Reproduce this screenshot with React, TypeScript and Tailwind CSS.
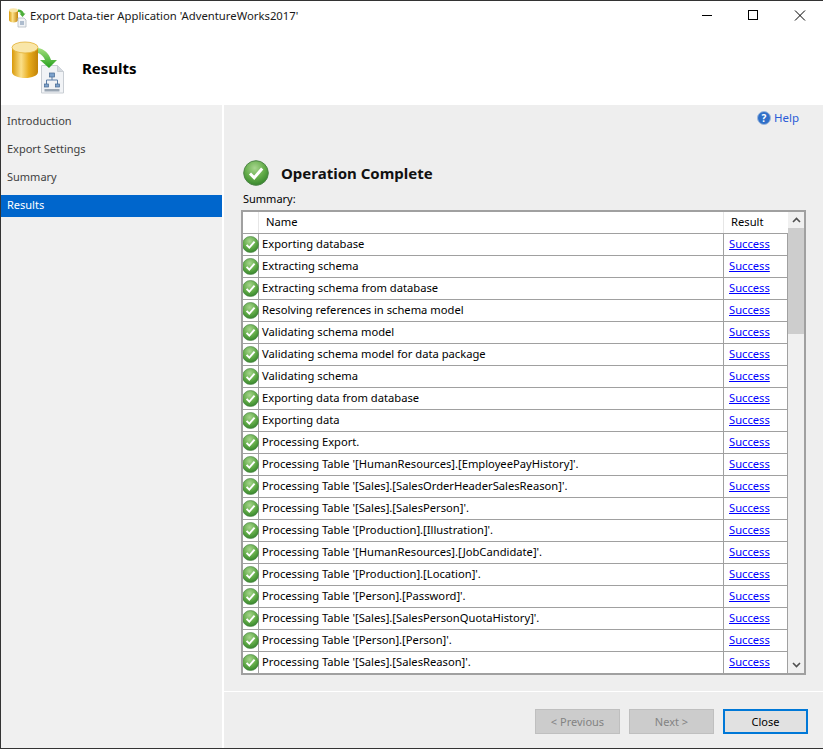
const rows = [
  "Exporting database",
  "Extracting schema",
  "Extracting schema from database",
  "Resolving references in schema model",
  "Validating schema model",
  "Validating schema model for data package",
  "Validating schema",
  "Exporting data from database",
  "Exporting data",
  "Processing Export.",
  "Processing Table '[HumanResources].[EmployeePayHistory]'.",
  "Processing Table '[Sales].[SalesOrderHeaderSalesReason]'.",
  "Processing Table '[Sales].[SalesPerson]'.",
  "Processing Table '[Production].[Illustration]'.",
  "Processing Table '[HumanResources].[JobCandidate]'.",
  "Processing Table '[Production].[Location]'.",
  "Processing Table '[Person].[Password]'.",
  "Processing Table '[Sales].[SalesPersonQuotaHistory]'.",
  "Processing Table '[Person].[Person]'.",
  "Processing Table '[Sales].[SalesReason]'.",
];

function Check({ size, id }: { size: number; id: string }) {
  return (
    <svg width={size} height={size} viewBox="0 0 26 26" className="shrink-0">
      <defs>
        <radialGradient id={id} cx="45%" cy="30%" r="75%">
          <stop offset="0%" stopColor="#a8d68f" />
          <stop offset="55%" stopColor="#62ab48" />
          <stop offset="100%" stopColor="#2f8028" />
        </radialGradient>
      </defs>
      <circle cx="13" cy="13" r="12.3" fill={`url(#${id})`} stroke="#4f8549" strokeWidth="1" />
      <path d="M7 13.5l4.2 4.2L19.2 8.6" fill="none" stroke="#fff" strokeWidth="3" />
    </svg>
  );
}

function Logo() {
  return (
    <svg width="56" height="56" viewBox="0 0 56 56" className="shrink-0">
      <defs>
        <linearGradient id="cyl" x1="0" x2="1" y1="0" y2="0">
          <stop offset="0%" stopColor="#d99a0a" />
          <stop offset="35%" stopColor="#fbe08a" />
          <stop offset="65%" stopColor="#e8ac1c" />
          <stop offset="100%" stopColor="#c28308" />
        </linearGradient>
        <linearGradient id="arrow" x1="0" x2="0" y1="0" y2="1">
          <stop offset="0%" stopColor="#a5e07f" />
          <stop offset="100%" stopColor="#23a01c" />
        </linearGradient>
      </defs>
      <path d="M1 7v24c0 3.5 6 6 13 6s13-2.500 13-6V7z" fill="url(#cyl)" />
      <ellipse cx="14" cy="6.500" rx="13" ry="5.500" fill="#f9e6a8" stroke="#e2b033" strokeWidth="0.8" />
      <path d="M30.500 24.500h16l6 6v21.500h-22z" fill="#f1f3f6" stroke="#c9ced4" strokeWidth="1" />
      <path d="M46.500 24.500v6h6" fill="#d5dae0" stroke="#c9ced4" strokeWidth="1" />
      <path d="M27 7c6 1 11 5 13 12h6l-8 8-9-8h5c-1-3-4-6-7-7z" fill="url(#arrow)" />
      <path d="M41 36v3M35.500 43v-4h11v4" fill="none" stroke="#5c7fa8" strokeWidth="1" />
      <rect x="38.500" y="32" width="5" height="4" fill="#7da2cc" stroke="#45678f" strokeWidth="0.7" />
      <rect x="33.500" y="43" width="4" height="3" fill="#7da2cc" stroke="#45678f" strokeWidth="0.7" />
      <rect x="44.500" y="43" width="4" height="3" fill="#7da2cc" stroke="#45678f" strokeWidth="0.7" />
      <rect x="33.500" y="48" width="15" height="2.500" fill="#9aa6b3" />
    </svg>
  );
}

function SmallLogo() {
  return (
    <svg width="16" height="16" viewBox="0 0 16 16" className="shrink-0 overflow-visible">
      <defs>
        <linearGradient id="cyl2" x1="0" x2="1" y1="0" y2="0">
          <stop offset="0%" stopColor="#d99a0a" />
          <stop offset="40%" stopColor="#fbe08a" />
          <stop offset="100%" stopColor="#c28308" />
        </linearGradient>
      </defs>
      <path d="M0 2v10c0 1.500 2 2.500 4.500 2.500S9 13.500 9 12V2z" fill="url(#cyl2)" />
      <ellipse cx="4.500" cy="2.200" rx="4.500" ry="2" fill="#f9e6a8" />
      <path d="M9 1.500c3 0 5 1.500 6 4h1.500l-3 3.500-3-3.500h1.500C11.500 4.500 10.500 4 9 4z" fill="#4caf3a" />
      <path d="M9 10h6l2 2v7H9z" fill="#f1f3f6" stroke="#b4bac2" strokeWidth="0.8" />
      <path d="M11 14h4M11 16h4" stroke="#6b85a5" strokeWidth="1" />
    </svg>
  );
}

function NavItem({ label, active }: { label: string; active?: boolean }) {
  return (
    <div
      className={`h-[22px] pl-[6px] pb-[1px] flex items-center ${
        active ? "bg-[#0066cc] text-white" : "text-[#404040]"
      }`}
    >
      {label}
    </div>
  );
}

function FooterButton({ label, primary }: { label: string; primary?: boolean }) {
  return primary ? (
    <div className="w-[85px] h-[25px] pt-[1px] flex items-center justify-center border-2 border-[#0078d7] bg-[#e1e1e1] text-black">
      {label}
    </div>
  ) : (
    <div className="w-[85px] h-[25px] pt-[1px] flex items-center justify-center border border-[#bfbfbf] bg-[#cccccc] text-[#838383]">
      {label}
    </div>
  );
}

export default function App() {
  return (
    <div
      className="w-[823px] h-[749px] flex flex-col bg-white border-l border-t border-b border-[#333333] text-[11px] text-black overflow-hidden"
      style={{ fontFamily: '"Noto Sans", "Open Sans", sans-serif' }}
    >
      {/* Title bar */}
      <div className="h-[30px] flex items-center shrink-0">
        <div className="ml-[8px] flex items-center">
          <SmallLogo />
        </div>
        <span className="ml-[5px] mt-[1px] text-[11.3px] text-[#1a1a1a]">
          Export Data-tier Application 'AdventureWorks2017'
        </span>
        <div className="ml-auto flex items-center">
          <svg width="46" height="30" viewBox="0 0 46 30">
            <path d="M17 14.500h10" stroke="#000" strokeWidth="1" />
          </svg>
          <svg width="46" height="30" viewBox="0 0 46 30">
            <rect x="17.500" y="9.500" width="9" height="9" fill="none" stroke="#000" strokeWidth="1" />
          </svg>
          <svg width="46" height="30" viewBox="0 0 46 30">
            <path d="M18 9.500l10 10M28 9.500l-10 10" stroke="#000" strokeWidth="1" />
          </svg>
        </div>
      </div>

      {/* Header */}
      <div className="h-[74px] shrink-0 flex items-start pl-[10px]">
        <div className="mt-[10px]">
          <Logo />
        </div>
        <span className="ml-[15px] mt-[24px] text-[15px] font-bold leading-[26px]">Results</span>
      </div>

      {/* Body */}
      <div className="flex-1 flex min-h-0 gap-[2px]">
        {/* Sidebar */}
        <div className="w-[221px] shrink-0 bg-[#f0f0f0] pt-[6px] flex flex-col gap-[6px]">
          <NavItem label="Introduction" />
          <NavItem label="Export Settings" />
          <NavItem label="Summary" />
          <NavItem label="Results" active />
        </div>

        {/* Main */}
        <div className="flex-1 bg-[#eeeeee] flex flex-col min-w-0">
          <div className="h-[586px] shrink-0 flex flex-col pl-[17px] pr-[17px]">
            <div className="h-[25px] flex items-center justify-end gap-[3px] pr-[7px] text-[11.5px] text-[#2a5bd7]">
              <svg width="14" height="14" viewBox="0 0 14 14">
                <circle cx="7" cy="7" r="6.500" fill="#2f6fc8" stroke="#9db8dc" strokeWidth="1" />
                <text x="7" y="10.500" fontSize="10" fontWeight="700" textAnchor="middle" fill="#fff">?</text>
              </svg>
              <span>Help</span>
            </div>
            <div className="mt-[29px] h-[28px] flex items-center gap-[12px] pl-[2px]">
              <Check size={26} id="bigcheck" />
              <span className="text-[15px] font-bold text-[#111111]">Operation Complete</span>
            </div>
            <div className="h-[20px] mt-[2px] mb-[1px] pl-[2px] flex items-center">Summary:</div>

            {/* Grid */}
            <div className="h-[465px] w-[565px] border-2 border-[#a0a0a0] flex bg-white overflow-hidden text-[11.2px]">
              <div className="w-[545px] shrink-0 flex flex-col">
                <div className="h-[22px] shrink-0 flex border-b border-[#a0a0a0]">
                  <div className="w-[16px] shrink-0 border-r border-[#e6e6e6]" />
                  <div className="flex-1 pl-[7px] flex items-center border-r border-[#e6e6e6]">Name</div>
                  <div className="w-[64px] shrink-0 pl-[7px] flex items-center">Result</div>
                </div>
                {rows.map((r, i) => (
                  <div key={i} className="h-[22px] shrink-0 flex border-b border-[#a0a0a0]">
                    <div className="w-[16px] shrink-0 border-r border-[#a0a0a0] flex items-center justify-center">
                      <div className="-ml-[1px] flex">
                        <Check size={17} id={`c${i}`} />
                      </div>
                    </div>
                    <div className="flex-1 pl-[3px] flex items-center border-r border-[#a0a0a0] whitespace-nowrap">
                      {r}
                    </div>
                    <div className="w-[64px] shrink-0 pl-[5px] flex items-center border-r border-[#a0a0a0]">
                      <span className="text-[#0000ff] underline">Success</span>
                    </div>
                  </div>
                ))}
              </div>
              <div className="flex-1 bg-[#f0f0f0] flex flex-col items-stretch">
                <div className="h-[16px] shrink-0 flex items-center justify-center">
                  <svg width="9" height="6" viewBox="0 0 9 6">
                    <path d="M1 5l3.500-3.500L8 5" fill="none" stroke="#505050" strokeWidth="1.600" />
                  </svg>
                </div>
                <div className="h-[106px] shrink-0 bg-[#cdcdcd]" />
                <div className="flex-1" />
                <div className="h-[16px] shrink-0 flex items-center justify-center">
                  <svg width="9" height="6" viewBox="0 0 9 6">
                    <path d="M1 1l3.500 3.500L8 1" fill="none" stroke="#505050" strokeWidth="1.600" />
                  </svg>
                </div>
              </div>
            </div>
          </div>
          <div className="flex-1 border-t border-white flex items-start justify-end pt-[17px] pr-[15px] gap-[9px]">
            <FooterButton label="< Previous" />
            <FooterButton label="Next >" />
            <FooterButton label="Close" primary />
          </div>
        </div>
      </div>
    </div>
  );
}
